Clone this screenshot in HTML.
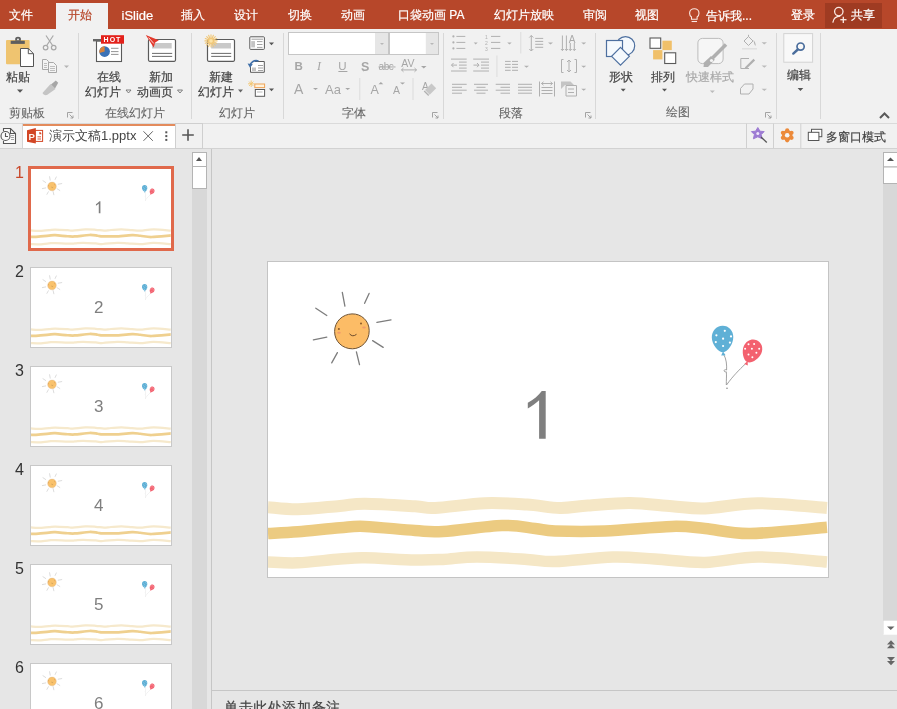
<!DOCTYPE html>
<html><head><meta charset="utf-8">
<style>
*{box-sizing:border-box}
html,body{margin:0;padding:0;width:897px;height:709px;overflow:hidden;background:#e6e6e6;font-family:"Liberation Sans",sans-serif;}
.a{position:absolute;white-space:nowrap}
.t{position:absolute;white-space:nowrap;font-size:12px;line-height:12px;-webkit-text-stroke:0.2px currentColor}
.w{color:#fff}
.g{color:#444}
.lbl{color:#666;-webkit-text-stroke:0.1px #666 !important}
.sep{position:absolute;width:1px;background:#d8d8d8}
.arr{position:absolute;width:0;height:0;border-left:3px solid transparent;border-right:3px solid transparent;border-top:3px solid #666}
.arrl{position:absolute;width:0;height:0;border-left:3px solid transparent;border-right:3px solid transparent;border-top:3px solid #aaa}
</style></head><body>
<div id="root" style="position:absolute;left:0;top:0;width:897px;height:709px;overflow:hidden;will-change:transform;background:#e6e6e6">
<svg width="0" height="0" style="position:absolute">
<defs>
<symbol id="slide" viewBox="0 0 560 315">
<g fill="none" stroke-linecap="butt">
<path d="M0,245.2 C5.0,245.5 18.0,247.5 30,247.3 C42.0,247.1 60.8,244.8 72,243.9 C83.2,243.0 84.5,241.7 97,241.8 C109.5,241.9 135.3,243.6 147,244.3 C158.7,245.0 155.3,246.5 167,246 C178.7,245.5 201.7,241.8 217,241.2 C232.3,240.6 246.5,241.8 259,242.6 C271.5,243.4 281.8,245.8 292,246 C302.2,246.2 308.3,244.3 320,243.5 C331.7,242.7 348.0,240.9 362,241 C376.0,241.1 391.5,243.4 404,244.3 C416.5,245.2 422.7,246.9 437,246.4 C451.3,245.9 469.7,241.3 490,241.2 C510.3,241.1 547.5,245.2 559,246" stroke="#f5e7c6" stroke-width="12"/>
<path d="M0,271.5 C5.0,271.2 18.0,270.8 30,269.8 C42.0,268.8 60.8,266.6 72,265.7 C83.2,264.8 84.5,263.9 97,264.4 C109.5,264.9 134.0,267.7 147,268.5 C160.0,269.3 160.5,270.2 175,269.4 C189.5,268.6 218.7,264.0 234,263.5 C249.3,263.0 258.2,265.6 267,266.5 C275.8,267.4 275.3,268.6 287,269 C298.7,269.4 317.5,269.8 337,269 C356.5,268.2 387.3,264.8 404,264.4 C420.7,264.0 424.0,265.3 437,266.5 C450.0,267.7 461.7,271.7 482,271.5 C502.3,271.3 546.2,266.3 559,265.3" stroke="#eccb81" stroke-width="11.5"/>
<path d="M0,300 C5.0,300.1 18.0,301.3 30,300.8 C42.0,300.3 60.8,297.8 72,297 C83.2,296.2 84.5,295.6 97,295.8 C109.5,296.0 134.0,297.7 147,298 C160.0,298.3 164.7,297.9 175,297.4 C185.3,296.9 195.0,295.0 209,295 C223.0,295.0 246.0,296.6 259,297.4 C272.0,298.1 272.7,299.9 287,299.5 C301.3,299.1 328.3,295.4 345,295 C361.7,294.6 371.7,296.1 387,297 C402.3,297.9 419.8,300.7 437,300.4 C454.2,300.1 469.7,295.1 490,295 C510.3,294.9 547.5,299.2 559,300" stroke="#f5e7c6" stroke-width="11.5"/>
</g>
<g stroke="#7d7d7d" stroke-width="1.3" stroke-linecap="round">
<line x1="74.3" y1="30.4" x2="76.9" y2="44.1"/>
<line x1="101.1" y1="31.4" x2="96.6" y2="41.3"/>
<line x1="47.8" y1="46.2" x2="58.8" y2="53.5"/>
<line x1="108.9" y1="60.3" x2="123" y2="57.8"/>
<line x1="45.4" y1="77.9" x2="58.8" y2="75.1"/>
<line x1="104.6" y1="78.6" x2="115.2" y2="85.4"/>
<line x1="69.4" y1="90.6" x2="63.7" y2="100.9"/>
<line x1="88.4" y1="89.9" x2="91.5" y2="102.6"/>
</g>
<path d="M84,51.9 C93.5,51.6 101.2,59 101.2,68.5 C101.4,79 93.5,86.7 84.5,86.8 C74.5,86.9 66.6,79.5 66.6,69.5 C66.6,59.5 74.5,52.2 84,51.9 Z" fill="#fcbc66" stroke="#6e5233" stroke-width="1"/>
<ellipse cx="71" cy="70.8" rx="1.8" ry="1" fill="#f09a6e"/>
<ellipse cx="96" cy="65.4" rx="1.8" ry="1" fill="#f09a6e"/>
<circle cx="70.9" cy="66.9" r="1" fill="#8a5a2a"/>
<circle cx="93" cy="61.6" r="1" fill="#8a5a2a"/>
<path d="M81.5,71.8 Q84.5,75.5 88.5,72.3" fill="none" stroke="#6b4a2a" stroke-width="1"/>
<g fill="none" stroke="#8a8a8a" stroke-width="0.8">
<path d="M455.5,92 C458.5,97 458.8,103 458.6,108 C455.5,106.5 455.2,110.5 458.3,109.8 C458.8,114 458.2,118 458.3,123"/>
<path d="M477.3,102 C471,108 465,114 458.5,123"/>
</g>
<circle cx="459" cy="126.3" r="0.8" fill="#8a8a8a"/>
<path d="M454.5,63.7 C460.5,63.5 465.3,68.5 465.3,75 C465.3,82.5 459.5,90 455.2,90.3 C450.5,90.5 443.8,82.5 443.8,75.5 C443.8,68.8 448.3,63.9 454.5,63.7 Z M453.2,93.5 L455,89.5 L457.6,93.3 Z" fill="#5fb0d6"/>
<g fill="#fff">
<circle cx="456.8" cy="68.8" r="1.1"/><circle cx="448.4" cy="73.3" r="1.1"/><circle cx="463" cy="74.4" r="1.1"/><circle cx="455.1" cy="76.7" r="1.1"/><circle cx="447.8" cy="80.1" r="1.1"/><circle cx="461.9" cy="80.6" r="1.1"/><circle cx="455.1" cy="84" r="1.1"/>
</g>
<g transform="rotate(24 484 89)">
<path d="M484,77.2 C489.2,77.2 493.5,81.5 493.5,87.5 C493.5,94 488.5,100.8 484.3,101 C480,101.2 474.5,94 474.5,87.5 C474.5,81.5 478.8,77.2 484,77.2 Z M482.3,104 L484.1,100 L486.1,104 Z" fill="#f3616f"/>
</g>
<g fill="#fff">
<circle cx="480.5" cy="82.3" r="1"/><circle cx="486.1" cy="82.1" r="1"/><circle cx="477.1" cy="86.8" r="1"/><circle cx="483.9" cy="86.8" r="1"/><circle cx="491.2" cy="86.8" r="1"/><circle cx="480.5" cy="92.5" r="1"/><circle cx="488.4" cy="90.8" r="1"/><circle cx="484.4" cy="95.3" r="1"/>
</g>
</symbol>
<symbol id="slideT" viewBox="0 0 560 315">
<g fill="none" stroke-linecap="butt">
<path d="M0,245.2 C5.0,245.5 18.0,247.5 30,247.3 C42.0,247.1 60.8,244.8 72,243.9 C83.2,243.0 84.5,241.7 97,241.8 C109.5,241.9 135.3,243.6 147,244.3 C158.7,245.0 155.3,246.5 167,246 C178.7,245.5 201.7,241.8 217,241.2 C232.3,240.6 246.5,241.8 259,242.6 C271.5,243.4 281.8,245.8 292,246 C302.2,246.2 308.3,244.3 320,243.5 C331.7,242.7 348.0,240.9 362,241 C376.0,241.1 391.5,243.4 404,244.3 C416.5,245.2 422.7,246.9 437,246.4 C451.3,245.9 469.7,241.3 490,241.2 C510.3,241.1 547.5,245.2 559,246" stroke="#f6e9cc" stroke-width="9"/>
<path d="M0,271.5 C5.0,271.2 18.0,270.8 30,269.8 C42.0,268.8 60.8,266.6 72,265.7 C83.2,264.8 84.5,263.9 97,264.4 C109.5,264.9 134.0,267.7 147,268.5 C160.0,269.3 160.5,270.2 175,269.4 C189.5,268.6 218.7,264.0 234,263.5 C249.3,263.0 258.2,265.6 267,266.5 C275.8,267.4 275.3,268.6 287,269 C298.7,269.4 317.5,269.8 337,269 C356.5,268.2 387.3,264.8 404,264.4 C420.7,264.0 424.0,265.3 437,266.5 C450.0,267.7 461.7,271.7 482,271.5 C502.3,271.3 546.2,266.3 559,265.3" stroke="#efd08f" stroke-width="11"/>
<path d="M0,300 C5.0,300.1 18.0,301.3 30,300.8 C42.0,300.3 60.8,297.8 72,297 C83.2,296.2 84.5,295.6 97,295.8 C109.5,296.0 134.0,297.7 147,298 C160.0,298.3 164.7,297.9 175,297.4 C185.3,296.9 195.0,295.0 209,295 C223.0,295.0 246.0,296.6 259,297.4 C272.0,298.1 272.7,299.9 287,299.5 C301.3,299.1 328.3,295.4 345,295 C361.7,294.6 371.7,296.1 387,297 C402.3,297.9 419.8,300.7 437,300.4 C454.2,300.1 469.7,295.1 490,295 C510.3,294.9 547.5,299.2 559,300" stroke="#f6e9cc" stroke-width="9"/>
</g>
<g stroke="#d0d0d0" stroke-width="3" stroke-linecap="round">
<line x1="74.3" y1="30.4" x2="76.9" y2="44.1"/>
<line x1="101.1" y1="31.4" x2="96.6" y2="41.3"/>
<line x1="47.8" y1="46.2" x2="58.8" y2="53.5"/>
<line x1="108.9" y1="60.3" x2="123" y2="57.8"/>
<line x1="45.4" y1="77.9" x2="58.8" y2="75.1"/>
<line x1="104.6" y1="78.6" x2="115.2" y2="85.4"/>
<line x1="69.4" y1="90.6" x2="63.7" y2="100.9"/>
<line x1="88.4" y1="89.9" x2="91.5" y2="102.6"/>
</g>
<path d="M84,51.9 C93.5,51.6 101.2,59 101.2,68.5 C101.4,79 93.5,86.7 84.5,86.8 C74.5,86.9 66.6,79.5 66.6,69.5 C66.6,59.5 74.5,52.2 84,51.9 Z" fill="#f9c26c" stroke="#d9b58a" stroke-width="1.5"/>
<ellipse cx="71" cy="70.8" rx="1.8" ry="1" fill="#f09a6e"/>
<ellipse cx="96" cy="65.4" rx="1.8" ry="1" fill="#f09a6e"/>
<circle cx="70.9" cy="66.9" r="1" fill="#8a5a2a"/>
<circle cx="93" cy="61.6" r="1" fill="#8a5a2a"/>
<path d="M81.5,71.8 Q84.5,75.5 88.5,72.3" fill="none" stroke="#6b4a2a" stroke-width="1"/>
<g fill="none" stroke="#e4e4e4" stroke-width="2">
<path d="M455.5,92 C458.5,97 458.8,103 458.6,108 C455.5,106.5 455.2,110.5 458.3,109.8 C458.8,114 458.2,118 458.3,123"/>
<path d="M477.3,102 C471,108 465,114 458.5,123"/>
</g>
<circle cx="459" cy="126.3" r="0.8" fill="#8a8a8a"/>
<path d="M454.5,63.7 C460.5,63.5 465.3,68.5 465.3,75 C465.3,82.5 459.5,90 455.2,90.3 C450.5,90.5 443.8,82.5 443.8,75.5 C443.8,68.8 448.3,63.9 454.5,63.7 Z M453.2,93.5 L455,89.5 L457.6,93.3 Z" fill="#5fb0d6"/>
<g fill="#fff">
<circle cx="456.8" cy="68.8" r="1.1"/><circle cx="448.4" cy="73.3" r="1.1"/><circle cx="463" cy="74.4" r="1.1"/><circle cx="455.1" cy="76.7" r="1.1"/><circle cx="447.8" cy="80.1" r="1.1"/><circle cx="461.9" cy="80.6" r="1.1"/><circle cx="455.1" cy="84" r="1.1"/>
</g>
<g transform="rotate(24 484 89)">
<path d="M484,77.2 C489.2,77.2 493.5,81.5 493.5,87.5 C493.5,94 488.5,100.8 484.3,101 C480,101.2 474.5,94 474.5,87.5 C474.5,81.5 478.8,77.2 484,77.2 Z M482.3,104 L484.1,100 L486.1,104 Z" fill="#f3616f"/>
</g>
<g fill="#fff">
<circle cx="480.5" cy="82.3" r="1"/><circle cx="486.1" cy="82.1" r="1"/><circle cx="477.1" cy="86.8" r="1"/><circle cx="483.9" cy="86.8" r="1"/><circle cx="491.2" cy="86.8" r="1"/><circle cx="480.5" cy="92.5" r="1"/><circle cx="488.4" cy="90.8" r="1"/><circle cx="484.4" cy="95.3" r="1"/>
</g>
</symbol>
<symbol id="one" viewBox="0 0 560 315">
<path d="M259.8,140.7 C265.5,137.5 270.5,133.5 273.8,128.9 L277.7,128.9 L277.7,176.7 L271.1,176.7 L271.1,138.2 C267.8,141.3 263.5,144.3 259.8,146.4 Z" fill="#7f7f7f"/>
</symbol>
</defs></svg>
<!-- title/tab bar -->
<div class="a" style="left:0;top:0;width:897px;height:29px;background:#b7472a"></div>
<div class="a" style="left:56px;top:3px;width:52px;height:26px;background:#f1f1f1"></div>
<div class="t w" style="left:9px;top:9px">文件</div>
<div class="t" style="left:68px;top:9px;color:#b7472a">开始</div>
<div class="t w" style="left:121.5px;top:8.5px;font-size:13px;line-height:13px">iSlide</div>
<div class="t w" style="left:181px;top:9px">插入</div>
<div class="t w" style="left:234px;top:9px">设计</div>
<div class="t w" style="left:288px;top:9px">切换</div>
<div class="t w" style="left:341px;top:9px">动画</div>
<div class="t w" style="left:398px;top:9px">口袋动画 PA</div>
<div class="t w" style="left:494px;top:9px">幻灯片放映</div>
<div class="t w" style="left:583px;top:9px">审阅</div>
<div class="t w" style="left:635px;top:9px">视图</div>
<div class="t w" style="left:706px;top:10px">告诉我...</div>
<div class="t w" style="left:791px;top:9px">登录</div>
<div class="a" style="left:825px;top:3px;width:57px;height:25px;background:#9f3b22"></div>
<div class="t w" style="left:851px;top:9px">共享</div>

<!-- ribbon -->
<div class="a" style="left:0;top:29px;width:897px;height:94px;background:#f1f1f1"></div>

<div class="sep" style="left:78px;top:33px;height:86px"></div>
<div class="sep" style="left:191px;top:33px;height:86px"></div>
<div class="sep" style="left:283px;top:33px;height:86px"></div>
<div class="sep" style="left:443px;top:33px;height:86px"></div>
<div class="sep" style="left:595px;top:33px;height:86px"></div>
<div class="sep" style="left:776px;top:33px;height:86px"></div>
<div class="sep" style="left:820px;top:33px;height:86px"></div>

<div class="t lbl" style="left:9px;top:107px">剪贴板</div>
<div class="t lbl" style="left:105px;top:107px">在线幻灯片</div>
<div class="t lbl" style="left:219px;top:107px">幻灯片</div>
<div class="t lbl" style="left:342px;top:107px">字体</div>
<div class="t lbl" style="left:499px;top:107px">段落</div>
<div class="t lbl" style="left:666px;top:106px">绘图</div>

<div class="t g" style="left:6px;top:71px">粘贴</div>
<div class="t g" style="left:97px;top:71px">在线</div>
<div class="t g" style="left:85px;top:86px">幻灯片</div>
<div class="t g" style="left:149px;top:71px">新加</div>
<div class="t g" style="left:137px;top:86px">动画页</div>
<div class="t g" style="left:209px;top:71px">新建</div>
<div class="t g" style="left:198px;top:86px">幻灯片</div>
<div class="t g" style="left:609px;top:71px">形状</div>
<div class="t g" style="left:651px;top:71px">排列</div>
<div class="t" style="left:686px;top:71px;color:#aaa">快速样式</div>
<div class="t g" style="left:787px;top:69px">编辑</div>

<!-- doc tab bar -->
<div class="a" style="left:0;top:123px;width:897px;height:26px;background:#f1f1f1"></div>
<div class="a" style="left:0;top:123px;width:897px;height:1px;background:#dadada"></div>
<div class="a" style="left:0;top:148px;width:897px;height:1px;background:#d2d2d2"></div>
<div class="a" style="left:22px;top:123px;width:1px;height:25px;background:#d4d4d4"></div>
<div class="a" style="left:23px;top:124px;width:152px;height:24px;background:#fff;border-top:2px solid #e38b5c"></div>
<div class="a" style="left:49px;top:129px;font-size:13px;line-height:14px;color:#444">演示文稿1.pptx</div>
<div class="t g" style="left:826px;top:131px;font-size:11.8px">多窗口模式</div>

<!-- left panel -->
<div class="a" style="left:211px;top:149px;width:1px;height:560px;background:#c6c6c6"></div>
<div class="a" style="left:192px;top:152px;width:15px;height:557px;background:#d8d8d8"></div>
<div class="a" style="left:192px;top:152px;width:15px;height:15px;background:#fff;border:1px solid #b4b4b4"></div>
<div class="a" style="left:196px;top:157px;width:0;height:0;border-left:3.5px solid transparent;border-right:3.5px solid transparent;border-bottom:4px solid #555"></div>
<div class="a" style="left:192px;top:166px;width:15px;height:23px;background:#fff;border:1px solid #b4b4b4"></div>
<div class="a" style="left:28px;top:166px;width:146px;height:85px;border:3px solid #e0694b;background:#fff"><svg class="a" style="left:0;top:0" width="140" height="79" viewBox="0 0 560 315"><use href="#slideT"/><use href="#one"/></svg></div>
<div class="a" style="left:15px;top:165px;font-size:16px;line-height:16px;color:#c9482a">1</div>
<div class="a" style="left:30px;top:267px;width:142px;height:81px;border:1px solid #c8c8c8;background:#fff"><svg class="a" style="left:0;top:0" width="140" height="79" viewBox="0 0 560 315"><use href="#slideT"/><text x="271" y="181" text-anchor="middle" font-family="Liberation Sans" font-size="68" fill="#7f7f7f">2</text></svg></div>
<div class="a" style="left:15px;top:264px;font-size:16px;line-height:16px;color:#333">2</div>
<div class="a" style="left:30px;top:366px;width:142px;height:81px;border:1px solid #c8c8c8;background:#fff"><svg class="a" style="left:0;top:0" width="140" height="79" viewBox="0 0 560 315"><use href="#slideT"/><text x="271" y="181" text-anchor="middle" font-family="Liberation Sans" font-size="68" fill="#7f7f7f">3</text></svg></div>
<div class="a" style="left:15px;top:363px;font-size:16px;line-height:16px;color:#333">3</div>
<div class="a" style="left:30px;top:465px;width:142px;height:81px;border:1px solid #c8c8c8;background:#fff"><svg class="a" style="left:0;top:0" width="140" height="79" viewBox="0 0 560 315"><use href="#slideT"/><text x="271" y="181" text-anchor="middle" font-family="Liberation Sans" font-size="68" fill="#7f7f7f">4</text></svg></div>
<div class="a" style="left:15px;top:462px;font-size:16px;line-height:16px;color:#333">4</div>
<div class="a" style="left:30px;top:564px;width:142px;height:81px;border:1px solid #c8c8c8;background:#fff"><svg class="a" style="left:0;top:0" width="140" height="79" viewBox="0 0 560 315"><use href="#slideT"/><text x="271" y="181" text-anchor="middle" font-family="Liberation Sans" font-size="68" fill="#7f7f7f">5</text></svg></div>
<div class="a" style="left:15px;top:561px;font-size:16px;line-height:16px;color:#333">5</div>
<div class="a" style="left:30px;top:663px;width:142px;height:81px;border:1px solid #c8c8c8;background:#fff"><svg class="a" style="left:0;top:0" width="140" height="79" viewBox="0 0 560 315"><use href="#slideT"/><text x="271" y="181" text-anchor="middle" font-family="Liberation Sans" font-size="68" fill="#7f7f7f">6</text></svg></div>
<div class="a" style="left:15px;top:660px;font-size:16px;line-height:16px;color:#333">6</div>

<!-- main slide -->
<div class="a" style="left:267px;top:261px;width:562px;height:317px;background:#fff;border:1px solid #c4c4c4"></div>
<svg class="a" style="left:268px;top:262px" width="560" height="315" viewBox="0 0 560 315"><use href="#slide"/><use href="#one"/></svg>

<!-- notes -->
<div class="a" style="left:212px;top:690px;width:685px;height:1px;background:#c6c6c6"></div>
<div class="a" style="left:224px;top:700px;font-size:14px;letter-spacing:0.6px;line-height:15px;color:#444;-webkit-text-stroke:0.2px #444">单击此处添加备注</div>

<!-- right scrollbar -->
<div class="a" style="left:883px;top:152px;width:14px;height:482px;background:#d8d8d8"></div>
<svg class="a" style="left:0;top:0" width="897" height="709" viewBox="0 0 897 709" font-family="Liberation Sans">
<!-- title bar icons -->
<g fill="none" stroke="#fbe9e3" stroke-width="1.1">
<path d="M691.5,17 C689.8,15.8 689.6,13.8 689.6,13.2 C689.6,10.6 691.8,8.8 694.3,8.8 C696.8,8.8 699,10.6 699,13.2 C699,13.8 698.8,15.8 697.1,17 L697.1,19.2 L691.5,19.2 Z"/>
<line x1="691.6" y1="21.5" x2="697" y2="21.5"/>
</g>
<g fill="none" stroke="#fbe9e3" stroke-width="1.3">
<circle cx="838.8" cy="11.6" r="4.2"/>
<path d="M832.8,22.6 C833.5,18.5 836.3,16.3 840.3,16.2"/>
<line x1="843.3" y1="16.7" x2="843.3" y2="22.9"/>
<line x1="840.3" y1="19.7" x2="846.5" y2="19.7"/>
</g>
<!-- paste -->
<rect x="6" y="40" width="23.6" height="24.2" rx="1" fill="#efc470"/>
<rect x="10.7" y="40.7" width="14.1" height="3.2" fill="#5e5e5e"/>
<path d="M15.2,40.8 V38.8 C15.2,37.6 16.4,36.8 18,36.8 C19.6,36.8 20.9,37.6 20.9,38.8 V40.8 Z" fill="#5e5e5e"/>
<circle cx="18" cy="39.3" r="0.9" fill="#fff"/>
<path d="M20.5,48.5 H28.3 L33.5,53.7 V66.5 H20.5 Z" fill="#fff" stroke="#555" stroke-width="1"/>
<path d="M28.3,48.5 V53.7 H33.5" fill="none" stroke="#555" stroke-width="1"/>
<path d="M17,89.5 h6 l-3,3.2 z" fill="#555"/>
<!-- scissors -->
<g fill="none" stroke="#a8a8a8" stroke-width="1.2">
<path d="M46,35.5 L52.6,45.5 M53.3,35.5 L46.7,45.5"/>
<circle cx="45.6" cy="47.6" r="2.3"/><circle cx="53.7" cy="47.6" r="2.3"/>
</g>
<!-- copy -->
<g fill="#f4f4f4" stroke="#a8a8a8" stroke-width="1">
<path d="M42.5,59.5 H46.5 L48.5,61.5 V69.5 H42.5 Z"/>
<path d="M48.5,62.5 H53.5 L56.5,65.5 V72.5 H48.5 Z"/>
</g>
<g stroke="#b0b0b0" stroke-width="0.8"><path d="M44,63.5h3 M44,65.5h3 M44,67.5h3 M50,66.5h5 M50,68.5h5 M50,70.5h5"/></g>
<path d="M64,65.5 h5 l-2.5,2.6 z" fill="#b4b4b4"/>
<!-- brush -->
<path d="M50.5,84 L55.5,89 L47,95 C45,95.5 43,94.5 42.5,93 Z" fill="#c4c4c4"/>
<path d="M51,84.5 L55.8,80.5 L58.2,82.8 L55,88.5 Z" fill="#a6a6a6"/>
<!-- launcher icons -->
<g fill="none" stroke="#9a9a9a" stroke-width="0.9">
<path d="M67.5,117.5 V112.5 H72.5 M69.5,114.5 L73,118 M73,115.5 V118 H70.5"/>
<path d="M432.5,117.5 V112.5 H437.5 M434.5,114.5 L438,118 M438,115.5 V118 H435.5"/>
<path d="M585.5,117.5 V112.5 H590.5 M587.5,114.5 L591,118 M591,115.5 V118 H588.5"/>
<path d="M765.5,117.5 V112.5 H770.5 M767.5,114.5 L771,118 M771,115.5 V118 H768.5"/>
</g>
<!-- online slides -->
<rect x="96.5" y="41" width="25" height="20.5" fill="#fff" stroke="#5a5a5a" stroke-width="1.1"/>
<rect x="93" y="39" width="8" height="2.4" fill="#666"/>
<rect x="101" y="35.2" width="23" height="8.5" fill="#e3211b"/>
<text x="112.5" y="42.2" font-size="7" font-weight="bold" fill="#fff" text-anchor="middle" letter-spacing="1">HOT</text>
<circle cx="104.6" cy="51.6" r="5.3" fill="#3b72b6"/>
<path d="M104.6,51.6 L104.6,46.3 A5.3,5.3 0 0 0 99.5,53 Z" fill="#d9843c"/>
<path d="M111,48.3h7.5 M111,51.6h7.5 M111,54.4h7.5" stroke="#777" stroke-width="0.8"/>
<path d="M126,90 h5 l-2.5,3 z" fill="none" stroke="#666" stroke-width="0.8"/>
<!-- new anim page -->
<rect x="148.5" y="39.5" width="27" height="21.8" rx="1.2" fill="#fff" stroke="#5a5a5a" stroke-width="1.2"/>
<rect x="152" y="43" width="19.7" height="5.5" fill="#c9c9c9"/>
<path d="M152,53.4h20.2 M152,56.4h20.2" stroke="#5a5a5a" stroke-width="0.9"/>
<path d="M145.8,35 L158.8,40.3 L155.2,42.5 L153.7,47.5 Z" fill="#e3392c"/>
<path d="M148.6,37.6 L153.8,43.5" stroke="#fff" stroke-width="0.8"/>
<path d="M177.5,90 h5 l-2.5,3 z" fill="none" stroke="#666" stroke-width="0.8"/>
<!-- new slide -->
<rect x="207.5" y="39.5" width="27" height="21.8" rx="1.2" fill="#fff" stroke="#5a5a5a" stroke-width="1.2"/>
<rect x="211.2" y="43" width="19.8" height="5.5" fill="#c9c9c9"/>
<path d="M211.2,53.4h20 M211.2,56.4h20" stroke="#5a5a5a" stroke-width="0.9"/>
<g stroke="#f1c777" stroke-width="1.1" stroke-linecap="round">
<path d="M211,34.8 V47 M204.9,40.9 H217.1 M206.7,36.7 L215.3,45.1 M206.7,45.1 L215.3,36.7 M208.6,35.2 L213.4,46.6 M205.3,43.3 L216.7,38.5 M213.4,35.2 L208.6,46.6 M205.3,38.5 L216.7,43.3"/>
</g>
<circle cx="211" cy="40.9" r="1.8" fill="#fbe3a8"/>
<path d="M238,89.5 h5 l-2.5,3 z" fill="#666"/>
<!-- layout -->
<rect x="249.8" y="36.8" width="14.6" height="12.6" rx="0.8" fill="#fff" stroke="#5a5a5a" stroke-width="1"/>
<rect x="251.2" y="41.1" width="3.8" height="6.3" fill="#c4c4c4"/>
<path d="M251.5,39.2h11.5 M257,41.6h5.5 M257,44.5h5.5 M257,47.4h5.5" stroke="#8a8a8a" stroke-width="0.8"/>
<path d="M269,42.6 h5 l-2.5,2.6 z" fill="#555"/>
<!-- reset -->
<path d="M255,61.5 H264.3 V72.3 H250.5 V66.5" fill="#fff" stroke="#5a5a5a" stroke-width="1"/>
<rect x="252" y="67.5" width="4" height="3.5" fill="#c4c4c4"/>
<path d="M258,65.5h5 M258,68h5 M258,70.5h5" stroke="#8a8a8a" stroke-width="0.8"/>
<path d="M250,66 C250.5,62.5 254,59.5 258.5,61" fill="none" stroke="#3f6fa9" stroke-width="1.8"/>
<path d="M247.6,63.5 L250,67.8 L252.8,64.2 Z" fill="#3f6fa9"/>
<!-- section -->
<rect x="254.8" y="84" width="9.8" height="3.6" fill="#fff2dc" stroke="#f0a455" stroke-width="1"/>
<rect x="255.3" y="89.5" width="9.3" height="6.8" fill="#fff" stroke="#5a5a5a" stroke-width="1"/>
<path d="M257,92h5.5" stroke="#aaa" stroke-width="0.8"/>
<g stroke="#f3c56f" stroke-width="0.9"><path d="M251.2,80.5 V87 M248,83.8 H254.4 M249,81.6 L253.4,86 M249,86 L253.4,81.6"/></g>
<path d="M269,88.6 h5 l-2.5,2.6 z" fill="#555"/>
<!-- font combos -->
<rect x="288.5" y="32.5" width="100" height="22" fill="#fff" stroke="#c6c6c6" stroke-width="1"/>
<rect x="375" y="33" width="13" height="21" fill="#e6e6e6"/>
<rect x="389.5" y="32.5" width="49" height="22" fill="#fff" stroke="#c6c6c6" stroke-width="1"/>
<rect x="425.8" y="33" width="12.2" height="21" fill="#e6e6e6"/>
<path d="M380,43 h4 l-2,2 z M430,43 h4 l-2,2 z" fill="#b8b8b8"/>
<!-- B I U S abc AV -->
<g fill="#a6a6a6">
<text x="294.5" y="69.8" font-size="11.5" font-weight="bold">B</text>
<text x="317" y="69.8" font-size="12" font-style="italic" font-family="Liberation Serif">I</text>
<text x="338.2" y="69.8" font-size="11.5">U</text>
<rect x="338.4" y="71" width="9" height="1"/>
<text x="361" y="70.8" font-size="12.5" font-weight="bold">S</text>
<text x="378.6" y="70.3" font-size="10" letter-spacing="-0.5">abc</text>
<rect x="378.5" y="66.5" width="17" height="0.9"/>
<text x="401.2" y="66.5" font-size="10.5">AV</text>
<path d="M421,66 h5.5 l-2.75,2.4 z M313,88 h5 l-2.5,2 z M345.2,88 h5 l-2.5,2 z M400,82.5 h5 l-2.5,2 z" />
<text x="294" y="93.8" font-size="14">A</text>
<text x="325" y="93.8" font-size="13">Aa</text>
<text x="370.5" y="94.3" font-size="12.5">A</text>
<text x="393" y="94.3" font-size="10.5">A</text>
<text x="422" y="90" font-size="10">A</text>
</g>
<path d="M378.5,84.3 l2.4,-2.2 l2.4,2.2 z" fill="#a6a6a6"/>
<path d="M401.5,69.9 H416.5 M403.5,68 L401.5,69.9 L403.5,71.8 M414.5,68 L416.5,69.9 L414.5,71.8" fill="none" stroke="#a6a6a6" stroke-width="0.9"/>
<path d="M362.5,70.5 l1,1" stroke="#ccc"/>
<path d="M425,90 L431.5,83.5 L436.2,88.2 L429.7,94.7 Z" fill="#c8c8c8"/>
<path d="M424.2,91 L428.7,95.5" stroke="#b0b0b0" stroke-width="1.2"/>
<rect x="359.3" y="78" width="1" height="22" fill="#dcdcdc"/>
<rect x="412.5" y="78" width="1" height="22" fill="#dcdcdc"/>
<!-- paragraph icons -->
<g stroke="#b0b0b0" stroke-width="1" fill="none">
<path d="M456.4,36.4h8.9 M456.4,42.4h8.9 M456.4,48.4h8.9"/>
<path d="M491,36.4h9.3 M491,42.4h9.3 M491,48.4h9.3"/>
<path d="M451,59.1h15.7 M459,62.1h7.7 M459,65.1h7.7 M459,68.1h7.7 M451,71h15.7 M451.5,65.1h5.5 M453.5,63 L451.5,65.1 L453.5,67.2"/>
<path d="M473.2,59.1h15.8 M481,62.1h8 M481,65.1h8 M481,68.1h8 M473.2,71h15.8 M473.5,65.1h5.5 M477,63 L479,65.1 L477,67.2"/>
<path d="M505,61.4h5.7 M505,64.4h5.7 M505,67.3h5.7 M505,70.3h5.7 M512,61.4h6 M512,64.4h6 M512,67.3h6 M512,70.3h6"/>
<path d="M452,84.3h14.7 M452,87.3h10 M452,90.2h14.7 M452,93.2h10"/>
<path d="M474,84.3h14 M476.5,87.3h9 M474,90.2h14 M476.5,93.2h9"/>
<path d="M495.7,84.3h14.3 M500.5,87.3h9.5 M495.7,90.2h14.3 M500.5,93.2h9.5"/>
<path d="M518,84.3h14 M518,87.3h14 M518,90.2h14 M518,93.2h14"/>
<path d="M539.5,81.5v15 M554.5,81.5v15 M541.5,87.5h11 M541.5,90.5h11 M541.5,93.5h11 M541.5,83.5h11 M543.5,81.8 L541.5,83.5 L543.5,85.2 M550.5,81.8 L552.5,83.5 L550.5,85.2"/>
<path d="M535.2,38.4h8 M535.2,41.4h8 M535.2,44.3h8 M535.2,47.3h8 M531.3,35.5v15.5 M529.3,37.5 L531.3,35.5 L533.3,37.5 M529.3,49 L531.3,51 L533.3,49"/>
<path d="M562.4,35.5v15 M566.4,35.5v15 M570.3,43v7.5 M574.3,43v7.5 M560.9,49 L562.4,50.5 L563.9,49 M564.9,49 L566.4,50.5 L567.9,49 M568.8,49 L570.3,50.5 L571.8,49 M572.8,49 L574.3,50.5 L575.8,49"/>
<path d="M563.5,59.5h-2v13h2 M574.5,59.5h2v13h-2 M569,60v12 M567,62 L569,60 L571,62 M567,70 L569,72 L571,70"/>
<path d="M566,85.5h10.5v10.5h-10.5z M568,89h6 M568,92.5h6"/>
</g>
<text x="568.8" y="42.5" font-size="10" fill="#aaaaaa">A</text>
<g fill="#b0b0b0">
<circle cx="453.4" cy="36.4" r="1.1"/><circle cx="453.4" cy="42.4" r="1.1"/><circle cx="453.4" cy="48.4" r="1.1"/>
<text x="485" y="39" font-size="5">1</text><text x="485" y="45" font-size="5">2</text><text x="485" y="51" font-size="5">3</text>
<path d="M561,81.5 L570.5,81.5 L574,85 L565,85 L561,89 Z" fill="#c4c4c4"/>
<path d="M473.7,42.4h4 l-2,2 z M507.2,42.4h4.5 l-2.25,2 z M548,42.4h5 l-2.5,2 z M581.2,42.4h5 l-2.5,2 z M524,65.8h5 l-2.5,2 z M581.2,65.8h5 l-2.5,2 z M581.2,88.8h5 l-2.5,2 z"/>
</g>
<rect x="520.3" y="32" width="1" height="21.5" fill="#dcdcdc"/>
<rect x="496.4" y="55.5" width="1" height="21.5" fill="#dcdcdc"/>
<!-- shapes -->
<g fill="#f5f9fd" stroke="#4d6f9f" stroke-width="1.2">
<circle cx="625.5" cy="45.8" r="9.2"/>
<rect x="606.5" y="40.5" width="16" height="16"/>
<path d="M620.5,47.4 L629.4,56.3 L620.5,65.2 L611.6,56.3 Z"/>
</g>
<path d="M620.7,88.8 h5 l-2.5,2.8 z M662,88.8 h5 l-2.5,2.8 z M797.6,88 h5.7 l-2.85,3 z" fill="#555"/>
<!-- arrange -->
<rect x="662.4" y="40.7" width="9.4" height="9.4" fill="#f0c06a"/>
<rect x="653.1" y="50.1" width="9.3" height="9.3" fill="#f0c06a"/>
<rect x="650" y="38" width="10.7" height="10.3" fill="#fff" stroke="#5a5a5a" stroke-width="1.1"/>
<rect x="664.7" y="52.8" width="11" height="10.7" fill="#fff" stroke="#5a5a5a" stroke-width="1.1"/>
<!-- quick styles -->
<rect x="697.9" y="38.4" width="25.2" height="25.2" rx="4.5" fill="#f6f6f6" stroke="#bcbcbc" stroke-width="1"/>
<path d="M726,44.5 L712.5,58" stroke="#b0b0b0" stroke-width="3.6"/>
<path d="M711,56 L714.8,59.8 L708,67 L703.5,67 L704,62.5 Z" fill="#b0b0b0"/>
<circle cx="711.5" cy="60.5" r="1.6" fill="#f4f4f4"/>
<path d="M709.8,90.6 h5 l-2.5,2.3 z" fill="#bbb"/>
<!-- fill/outline/effects -->
<g fill="none" stroke="#b0b0b0" stroke-width="1">
<path d="M744,41 L748.5,36.5 L753,41 L748.5,45.5 Z M748.5,36.5 V34.8"/>
<path d="M749,68.5 H740.8 V58.5 H749"/>
<path d="M740.5,88.5 L744.5,84 H753 V89 L749,94 H740.5 Z"/>
</g>
<path d="M753.5,40 C755,42 756,44 755.5,46 C754.5,45 753.8,43 753.5,40 Z" fill="#b0b0b0"/>
<rect x="742" y="48" width="15" height="1.5" fill="#e0e0e0"/>
<path d="M754.3,59.6 L745.5,68.3" stroke="#b0b0b0" stroke-width="2.2"/>
<path d="M761.6,42.3 h5.4 l-2.7,2.2 z M761.6,65.5 h5.4 l-2.7,2.2 z M761.6,88.7 h5.4 l-2.7,2.2 z" fill="#bbb"/>
<!-- edit -->
<rect x="783.8" y="33.6" width="28.8" height="28.6" fill="#f8f8f8" stroke="#d3d3d3" stroke-width="1"/>
<circle cx="800.6" cy="46.6" r="3.6" fill="none" stroke="#4a6d9c" stroke-width="1.7"/>
<path d="M797.8,49.5 L793.3,53.6" stroke="#4a6d9c" stroke-width="2.4" stroke-linecap="round"/>
<path d="M880,118 L884.5,113.5 L889,118" fill="none" stroke="#5a5a5a" stroke-width="2"/>
<!-- tab bar icons -->
<g fill="none" stroke="#555" stroke-width="1.1">
<path d="M3.5,131 V128.5 H10.5 L15.5,133.5 V143.5 H3.5 V141" fill="#fafafa"/>
<path d="M10.5,128.5 V133.5 H15.5"/>
<circle cx="5.5" cy="136" r="4.5" fill="#fafafa"/>
<path d="M5.5,133 V136.5 H8"/>
<path d="M11,135.5h3 M11,137.5h3 M11,139.5h3" stroke="#999" stroke-width="0.9"/>
</g>
<path d="M27,130.2 L35.8,128 V143.6 L27,141.8 Z" fill="#d24625"/>
<rect x="35.4" y="130.4" width="7.2" height="11" fill="#fff" stroke="#d24625" stroke-width="1"/>
<path d="M37.5,136.8h3.5 M37.5,139h3.5" stroke="#d24625" stroke-width="0.9"/>
<path d="M39.3,132 v2.2 h2.2 a2.2,2.2 0 0 0 -2.2,-2.2 z" fill="#d24625"/>
<text x="28.6" y="139.6" font-size="9.5" font-weight="bold" fill="#fff5ee">P</text>
<path d="M143.5,131.3 L152.8,140.8 M152.8,131.3 L143.5,140.8" stroke="#666" stroke-width="1"/>
<g fill="#555"><rect x="165.3" y="131.3" width="2" height="2"/><rect x="165.3" y="135.1" width="2" height="2"/><rect x="165.3" y="138.9" width="2" height="2"/></g>
<rect x="175.5" y="123.5" width="27" height="25" fill="none" stroke="#cfcfcf" stroke-width="1"/>
<path d="M188,129.2 V140.7 M182.2,135 H193.8" stroke="#555" stroke-width="1.6"/>
<path d="M746.5,123.5 V148 M773.5,123.5 V148 M800.8,123.5 V148" stroke="#d0d0d0" stroke-width="1"/>
<path d="M757.8,127.5 L760,131.2 L764.2,131.6 L761.2,134.6 L762.2,138.8 L757.8,136.8 L753.4,138.8 L754.4,134.6 L751.4,131.6 L755.6,131.2 Z" fill="#9d7bd3" stroke="#9d7bd3" stroke-width="1" stroke-linejoin="round"/>
<circle cx="757.8" cy="133.6" r="1.5" fill="#efe6fb"/>
<path d="M761,137 L766.8,142.5" stroke="#555" stroke-width="1.3"/>
<g transform="translate(787.2 135.3)">
<circle r="5.2" fill="#ec8a3a"/>
<g fill="#ec8a3a"><circle cx="0" cy="-5" r="2.1"/><circle cx="4.33" cy="-2.5" r="2.1"/><circle cx="4.33" cy="2.5" r="2.1"/><circle cx="0" cy="5" r="2.1"/><circle cx="-4.33" cy="2.5" r="2.1"/><circle cx="-4.33" cy="-2.5" r="2.1"/></g>
<circle r="2.3" fill="#f4f4f4"/>
</g>
<g fill="#fff" stroke="#555" stroke-width="1">
<rect x="811.5" y="129.3" width="10.3" height="7.4"/>
<rect x="808.3" y="132.3" width="10.6" height="8.2"/>
</g>
<!-- right scrollbar -->
<rect x="883.5" y="152.5" width="14" height="14.5" fill="#fff" stroke="#b4b4b4" stroke-width="1"/>
<path d="M887,161 L890.5,157.5 L894,161 Z" fill="#555"/>
<rect x="883.5" y="167" width="14" height="16.5" fill="#fff" stroke="#b4b4b4" stroke-width="1"/>
<rect x="883.5" y="620.7" width="14" height="14" fill="#fff" stroke="#e0e0e0" stroke-width="0"/>
<path d="M887,626.4 h7.5 l-3.75,3.6 z" fill="#666"/>
<g fill="#666">
<path d="M887,644.5 l4,-4.2 l4,4.2 z M887,648.3 l4,-4.2 l4,4.2 z"/>
<path d="M887,657 l4,4.2 l4,-4.2 z M887,661 l4,4.2 l4,-4.2 z"/>
</g>
</svg>

</div>
</body></html>
